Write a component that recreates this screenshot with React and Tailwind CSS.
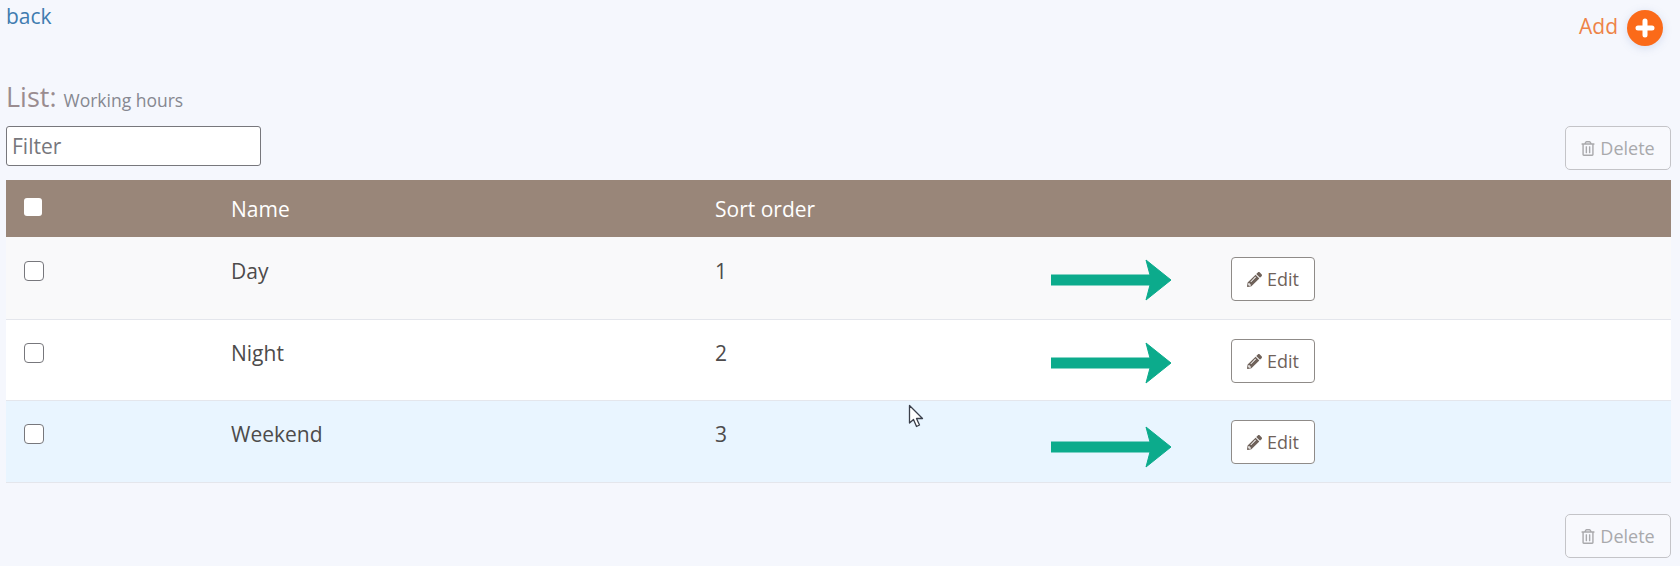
import React from "react";
import { FaPencilAlt, FaRegTrashAlt } from "react-icons/fa";

const rows = [
  { name: "Day", order: 1, bg: "bg-[#f9f9fa]", h: "h-[83px]", pt: "pt-[21px]", arrow: "mt-[1px]" },
  { name: "Night", order: 2, bg: "bg-white", h: "h-[81px]", pt: "pt-[20px]", arrow: "mt-[2px]" },
  { name: "Weekend", order: 3, bg: "bg-[#e9f5ff]", h: "h-[82px]", pt: "pt-[20px]", arrow: "mt-[5px]" },
];

function Arrow() {
  return (
    <svg width="120" height="42" viewBox="0 0 120 42" className="shrink-0">
      <path d="M0 16 H99 L95 1 L120 21 L95 41 L99 26 H0 Z" fill="#0cab8c" stroke="#0cab8c" strokeWidth="1" strokeLinejoin="round" />
    </svg>
  );
}

function DeleteButton() {
  return (
    <button
      type="button"
      className="flex h-[44px] w-[106px] items-center justify-center gap-[5px] rounded-[5px] border border-[#c4c4c8] bg-[#f8f9fd] text-[18px] text-[#a9a9ac]"
    >
      <FaRegTrashAlt className="h-[15px] w-[14px]" />
      Delete
    </button>
  );
}

function Cursor() {
  return (
    <svg width="17" height="25" viewBox="0 0 17 25" className="absolute left-[908px] top-[404px]">
      <path d="M1.5 1.5 V19 L5.5 15.5 L8.5 22.5 L11.5 21 L8.5 14.5 H14.5 Z" fill="#fff" stroke="#3a3f4a" strokeWidth="1.3" strokeLinejoin="round" />
    </svg>
  );
}

export default function App() {
  return (
    <div
      className="relative h-[566px] w-[1680px] overflow-hidden bg-[#f5f7fd] pl-[6px] pr-[9px]"
      style={{ fontFamily: '"Open Sans", sans-serif' }}
    >
      <div className="flex items-start justify-between">
        <a className="mt-[3px] text-[21px] leading-[27px] text-[#3f7cb0]">back</a>
        <div className="mr-[8px] mt-[10px] flex items-center gap-[9px]">
          <span className="mb-[4px] text-[21px] leading-[27px] text-[#ee8348]">Add</span>
          <span className="flex h-[36px] w-[36px] items-center justify-center rounded-full bg-[#fb6a19] shadow-[0_2px_8px_rgba(120,140,190,0.25)]">
            <svg width="20" height="20" viewBox="0 0 20 20">
              <path d="M10 3 V17 M3 10 H17" stroke="#fff" strokeWidth="5" strokeLinecap="round" />
            </svg>
          </span>
        </div>
      </div>

      <div className="mt-[34px] flex items-baseline gap-[7px] leading-[34px]">
        <span className="text-[27px] text-[#9a8c90]">List:</span>
        <span className="text-[17.5px] text-[#868790]">Working hours</span>
      </div>

      <div className="mt-[9px] flex items-start justify-between">
        <input
          placeholder="Filter"
          className="h-[40px] w-[255px] rounded-[3px] border border-[#77777c] bg-white px-[5px] text-[21px] text-[#555] outline-none placeholder:text-[#77777c]"
        />
        <DeleteButton />
      </div>

      <div className="mt-[10px] flex h-[57px] items-center bg-[#998679] pt-[2px] text-[21px] text-white">
        <div className="w-[225px] pl-[18px]">
          <div className="mb-[6px] h-[18px] w-[18px] rounded-[3px] bg-white" />
        </div>
        <div className="w-[484px]">Name</div>
        <div>Sort order</div>
      </div>

      {rows.map((row) => (
        <div key={row.name} className={`flex items-start border-b border-[#e4e6ec] text-[21px] text-[#4d4b4b] ${row.bg} ${row.h} ${row.pt}`}>
          <div className="w-[225px] pl-[18px] pt-[3px]">
            <div className="h-[20px] w-[20px] rounded-[4px] border border-[#77777c] bg-white" />
          </div>
          <div className="w-[484px] leading-[27px]">{row.name}</div>
          <div className="w-[336px] leading-[27px]">{row.order}</div>
          <div className={row.arrow}>
            <Arrow />
          </div>
          <button
            type="button"
            className="ml-[60px] mt-[-1px] flex h-[44px] w-[84px] items-center justify-center gap-[5px] rounded-[4px] border border-[#8f8b88] bg-white text-[18px] text-[#6f625a]"
          >
            <FaPencilAlt className="h-[15px] w-[15px]" />
            Edit
          </button>
        </div>
      ))}

      <div className="mt-[31px] flex justify-end">
        <DeleteButton />
      </div>

      <Cursor />
    </div>
  );
}
